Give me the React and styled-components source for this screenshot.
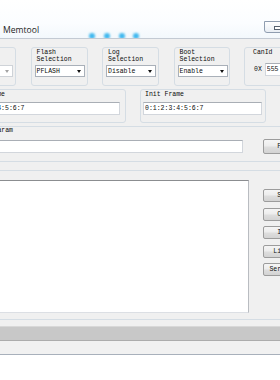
import styled, { createGlobalStyle } from 'styled-components';

const GlobalStyle = createGlobalStyle`
  * { box-sizing: border-box; }
  html, body { margin: 0; padding: 0; background: #ffffff; overflow: hidden; }
  body { font-family: "Liberation Mono", "DejaVu Sans Mono", monospace; color: #111; }
`;

const Window = styled.div`
  width: 440px;
  margin-left: -70px;
  display: flex;
  flex-direction: column;
`;

const TitleBar = styled.div`
  height: 39px;
  display: flex;
  align-items: flex-start;
  padding: 0 10px 0 73px;
  background: linear-gradient(#ffffff 0%, #fbfdff 60%, #f3f8fc 100%);
  border-bottom: 1px solid #c3cad3;
`;

const Title = styled.div`
  margin-top: 25px;
  font-family: "Open Sans", "Liberation Sans", sans-serif;
  font-size: 8.6px;
  line-height: 10px;
  color: #1c1c1c;
`;

const Glow = styled.svg`
  margin-left: 45px;
  margin-top: 24px;
  flex: none;
`;

const Spacer = styled.div`
  flex: 1;
`;

const Caption = styled.div`
  display: flex;
  margin-top: 21px;
`;

const CapBtn = styled.div`
  width: ${(p) => p.w}px;
  height: 12px;
  display: flex;
  align-items: center;
  justify-content: center;
  border: 1px solid #8f9db0;
  border-left-width: ${(p) => (p.first ? 1 : 0)}px;
  border-radius: ${(p) => (p.first ? '0 0 0 3px' : '0')};
  background: linear-gradient(#fdfdfe, #e9eef4);
`;

const MinGlyph = styled.span`
  width: 7px;
  height: 4px;
  border: 1px solid #55606e;
  background: #fff;
  margin-top: 2px;
`;

const Body = styled.div`
  background: #f0f0f0;
  padding-top: 8px;
  display: flex;
  flex-direction: column;
`;

const Row = styled.div`
  display: flex;
  gap: ${(p) => p.gap || 14}px;
  padding-left: ${(p) => p.left}px;
  margin-top: ${(p) => p.top || 0}px;
`;

const Group = styled.div`
  width: ${(p) => (p.w ? `${p.w}px` : 'auto')};
  flex: ${(p) => (p.w ? 'none' : '1')};
  height: ${(p) => p.h}px;
  border: 1px solid #d5dde4;
  border-right-color: ${(p) => (p.open ? 'transparent' : '#d5dde4')};
  border-radius: 3px;
  padding: ${(p) => p.pad || '1px 3px 0 3px'};
  display: flex;
  flex-direction: column;
`;

const Label = styled.div`
  font-size: 6.5px;
  line-height: 7px;
  height: ${(p) => p.h || 7}px;
  padding-left: ${(p) => (p.indent === undefined ? 2 : p.indent)}px;
  white-space: pre-line;
  color: #0c0c0c;
`;

const Combo = styled.div`
  width: ${(p) => p.w}px;
  height: 12px;
  margin-top: 2px;
  display: flex;
  align-items: center;
  justify-content: space-between;
  padding: 0 3px 0 1px;
  background: #ffffff;
  border: 1px solid ${(p) => (p.disabled ? '#cfd3d8' : '#a9b0b9')};
  font-size: 6.5px;
  color: ${(p) => (p.disabled ? '#9a9a9a' : '#0c0c0c')};
  &::after {
    content: '';
    border-left: 2.5px solid transparent;
    border-right: 2.5px solid transparent;
    border-top: 3px solid ${(p) => (p.disabled ? '#a3a3a3' : '#111')};
  }
`;

const IdRow = styled.div`
  display: flex;
  align-items: center;
  gap: 3px;
  padding-left: 3px;
  font-size: 6.5px;
`;

const Field = styled.input`
  width: ${(p) => (p.w ? `${p.w}px` : 'auto')};
  height: 13px;
  margin: ${(p) => p.m || 0};
  padding: 0 1px;
  border: 1px solid #d2d6dc;
  border-top-color: #a9aeb5;
  background: #ffffff;
  font-family: "Liberation Mono", "DejaVu Sans Mono", monospace;
  font-size: 6.5px;
  color: #0c0c0c;
  outline: none;
`;

const ParamLine = styled.div`
  display: flex;
  align-items: center;
  margin-top: 5px;
`;

const Button = styled.div`
  width: 48px;
  height: ${(p) => p.h || 13}px;
  margin-left: ${(p) => p.ml || 0}px;
  display: flex;
  align-items: center;
  justify-content: center;
  border: 1px solid #9c9c9c;
  border-radius: 2px;
  background: linear-gradient(#f5f5f5 0%, #ececec 48%, #dedede 52%, #d3d3d3 100%);
  font-size: 6.5px;
  color: #111;
  white-space: nowrap;
`;

const LogArea = styled.div`
  display: flex;
  padding-top: 9px;
`;

const Output = styled.textarea`
  width: 276px;
  height: 133px;
  margin: 0;
  padding: 1px;
  resize: none;
  border: 1px solid #dcdfe4;
  border-top-color: #8b8d90;
  border-right-color: #b9bcc1;
  background: #ffffff;
  outline: none;
`;

const ButtonColumn = styled.div`
  display: flex;
  flex-direction: column;
  gap: 5.5px;
  margin-left: 14px;
  padding-top: 9px;
`;

const StatusBar = styled.div`
  height: 15px;
  margin-top: 6px;
  background: #c8c8c8;
  border-top: 1px solid #d8d8d8;
  border-bottom: 1px solid #acacac;
`;

const Footer = styled.div`
  height: 14px;
  background: #f1f1f1;
  border-bottom: 1px solid #a8b0bb;
`;

const actions = ['Start', 'Clear', 'Index', 'Listing', 'SerialNum'];

const App = () => {
  return (
    <Window>
      <GlobalStyle />
      <TitleBar>
        <Title>Memtool</Title>
        <Glow width="60" height="14" viewBox="0 0 60 14">
          <defs>
            <filter id="soft" x="-50%" y="-50%" width="200%" height="200%">
              <feGaussianBlur stdDeviation="1.1" />
            </filter>
          </defs>
          <line x1="22" y1="3" x2="44" y2="3" stroke="#9fd3f5" strokeWidth="1.4" filter="url(#soft)" />
          <g fill="#3fb8ef" filter="url(#soft)">
            <circle cx="8" cy="12" r="3" />
            <circle cx="23" cy="12" r="3" />
            <circle cx="38" cy="12" r="3" />
            <circle cx="52" cy="12" r="3" />
          </g>
        </Glow>
        <Spacer />
        <Caption>
          <CapBtn w={26} first>
            <MinGlyph />
          </CapBtn>
          <CapBtn w={26} />
          <CapBtn w={44} />
        </Caption>
      </TitleBar>

      <Body>
        <Row left={6} gap={14.5}>
          <Group w={80} h={39}>
            <Label h={14}>{'Target\nSelection'}</Label>
            <Combo w={73} disabled>{'TC27x'}</Combo>
          </Group>
          <Group w={57} h={39}>
            <Label h={14}>{'Flash\nSelection'}</Label>
            <Combo w={50}>PFLASH</Combo>
          </Group>
          <Group w={57} h={39}>
            <Label h={14}>{'Log\nSelection'}</Label>
            <Combo w={50}>Disable</Combo>
          </Group>
          <Group w={56} h={39}>
            <Label h={14}>{'Boot\nSelection'}</Label>
            <Combo w={50}>Enable</Combo>
          </Group>
          <Group w={70} h={39} pad="1px 3px 0 6px">
            <Label h={14}>CanId</Label>
            <IdRow>
              <span>0X</span>
              <Field w={40} readOnly defaultValue="555" />
            </IdRow>
          </Group>
        </Row>

        <Row left={31} top={3}>
          <Group w={165} h={34} pad="1px 2px 0 2px">
            <Label>Mask Frame</Label>
            <Field w={156} m="4px 0 0 0" readOnly defaultValue="0:1:2:3:4:5:6:7" />
          </Group>
          <Group w={126} h={34} pad="1px 2px 0 2px">
            <Label>Init Frame</Label>
            <Field w={119} m="4px 0 0 0" readOnly defaultValue="0:1:2:3:4:5:6:7" />
          </Group>
        </Row>

        <Row left={40} top={3}>
          <Group h={36} open pad="0 2px 0 2px">
            <Label indent={1}>Read Param</Label>
            <ParamLine>
              <Field w={270} readOnly defaultValue="" />
              <Button ml={20} h={15}>Fetch</Button>
            </ParamLine>
          </Group>
        </Row>

        <Row left={40} top={8}>
          <Group h={150} open pad="0 2px 0 2px">
            <LogArea>
              <Output readOnly defaultValue="" />
              <ButtonColumn>
                {actions.map((a) => (
                  <Button key={a}>{a}</Button>
                ))}
              </ButtonColumn>
            </LogArea>
          </Group>
        </Row>

        <StatusBar />
        <Footer />
      </Body>
    </Window>
  );
};

export default App;
